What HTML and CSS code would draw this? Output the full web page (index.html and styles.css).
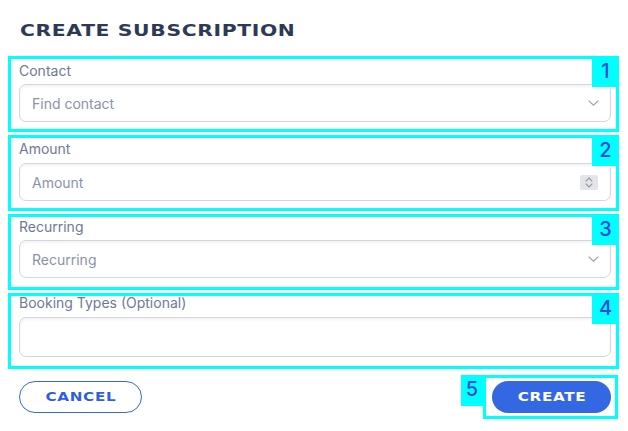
FILE: index.html
```html
<!DOCTYPE html>
<html lang="en">
<head>
<meta charset="utf-8">
<title>Create Subscription</title>
<link rel="stylesheet" href="styles.css">
</head>
<body>
<main class="page">
  <h1 class="title"><span class="wide">CREATE SUBSCRIPTION</span></h1>
  <div class="fields">
    <div class="group g1">
      <span class="tag">1</span>
      <label class="label">Contact</label>
      <div class="control">
        <span class="ph">Find contact</span>
        <svg class="chev" width="11" height="6" viewBox="0 0 11 6"><polyline points="0.6,0.6 5.5,5.2 10.4,0.6" fill="none" stroke="#9ba0ad" stroke-width="1.2"/></svg>
      </div>
    </div>
    <div class="group g2">
      <span class="tag">2</span>
      <label class="label">Amount</label>
      <div class="control">
        <span class="ph">Amount</span>
        <span class="stepper">
          <svg width="8" height="5" viewBox="0 0 8 5"><polyline points="0.7,4.3 4,1 7.3,4.3" fill="none" stroke="#8d92a0" stroke-width="1.1"/></svg>
          <svg width="8" height="5" viewBox="0 0 8 5"><polyline points="0.7,0.7 4,4 7.3,0.7" fill="none" stroke="#8d92a0" stroke-width="1.1"/></svg>
        </span>
      </div>
    </div>
    <div class="group g3">
      <span class="tag">3</span>
      <label class="label">Recurring</label>
      <div class="control">
        <span class="ph">Recurring</span>
        <svg class="chev" width="11" height="6" viewBox="0 0 11 6"><polyline points="0.6,0.6 5.5,5.2 10.4,0.6" fill="none" stroke="#9ba0ad" stroke-width="1.2"/></svg>
      </div>
    </div>
    <div class="group g4">
      <span class="tag">4</span>
      <label class="label">Booking Types (Optional)</label>
      <div class="control tall"></div>
    </div>
  </div>
  <div class="actions">
    <button class="btn btn-outline"><span class="wide">CANCEL</span></button>
    <div class="create-wrap">
      <span class="tag tag-side">5</span>
      <div class="hl">
        <button class="btn btn-solid"><span class="wide">CREATE</span></button>
      </div>
    </div>
  </div>
</main>
</body>
</html>
```
FILE: styles.css
```css
* { box-sizing: border-box; }
html, body { margin: 0; background: #ffffff; }
body { font-family: Inter, "Noto Sans", sans-serif; }

.page {
  padding: 20px 9px 0 8px;
}

.wide {
  display: inline-block;
  font-family: "DejaVu Sans", sans-serif;
  font-weight: 700;
  transform: scaleX(1.27);
}

.title {
  margin: 0 0 15px 12px;
  font-size: 16px;
  line-height: 20px;
  color: #2e3a55;
  letter-spacing: 0.5px;
}
.title .wide { transform-origin: left center; }

.fields {
  display: flex;
  flex-direction: column;
  gap: 3px;
}

.group {
  position: relative;
  height: 76px;
  border: 3px solid #00ffff;
  padding: 2px 5px 0 8px;
  display: flex;
  flex-direction: column;
}
.g2 { padding-top: 1px; }
.g3 { padding-top: 0; }
.g4 { padding-top: 0; }
.g4 .label { margin-top: -3px; }

.label {
  font-size: 14px;
  line-height: 20px;
  color: #6f7996;
  margin-bottom: 3px;
}
.g2 .label, .g4 .label { margin-bottom: 4px; }

.control {
  height: 38px;
  border: 1px solid #d4d6de;
  border-radius: 7px;
  background: #fff;
  box-shadow: inset 0 2px 3px rgba(30, 40, 70, 0.05);
  padding: 0 11px 0 12px;
  display: flex;
  align-items: center;
  justify-content: space-between;
}
.control.tall { height: 40px; }

.ph {
  font-size: 14px;
  color: #8b93a7;
}

.stepper {
  width: 18px;
  height: 15px;
  margin-right: 1px;
  background: #e4e5ea;
  border-radius: 2px;
  display: flex;
  flex-direction: column;
  align-items: center;
  justify-content: center;
  gap: 1px;
}
.stepper svg { display: block; }

.tag {
  position: absolute;
  top: -3px;
  right: -3px;
  width: 27px;
  height: 31px;
  background: #00ffff;
  color: #3a49d6;
  font-family: Inter, sans-serif;
  font-size: 20px;
  font-weight: 500;
  line-height: 31px;
  text-align: center;
}

.actions {
  display: flex;
  justify-content: space-between;
  align-items: flex-start;
  margin-top: 6px;
  padding: 0 1px 0 11px;
}

.btn {
  height: 32px;
  border-radius: 16px;
  font-size: 12px;
  letter-spacing: 0.5px;
  cursor: pointer;
  padding: 0;
  display: flex;
  align-items: center;
  justify-content: center;
}
.btn-outline {
  margin-top: 6px;
  width: 123px;
  border: 1px solid #3567e0;
  background: #fff;
  color: #2f5fdc;
}
.btn-solid {
  width: 119px;
  border: none;
  background: #3468e3;
  color: #ffffff;
}

.create-wrap {
  display: flex;
  align-items: flex-start;
}
.tag-side {
  position: static;
  width: 22px;
  height: 31px;
  line-height: 29px;
}
.hl {
  border: 3px solid #00ffff;
  padding: 3px 4px 3px 6px;
}
```
